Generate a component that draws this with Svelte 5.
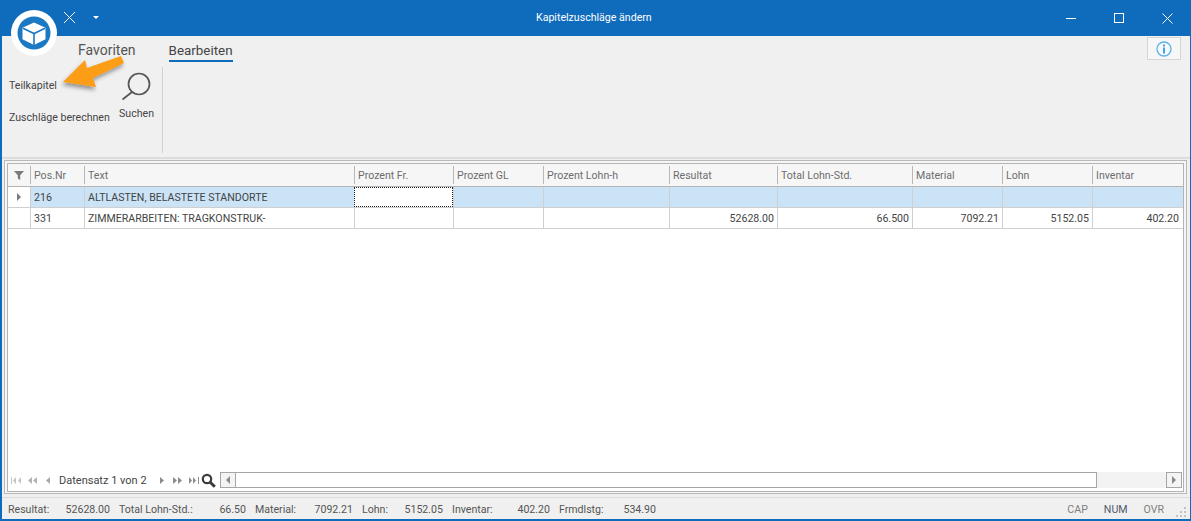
<script>
  const cols = [
    { label: 'Pos.Nr', w: 54 },
    { label: 'Text', w: 270 },
    { label: 'Prozent Fr.', w: 99 },
    { label: 'Prozent GL', w: 90 },
    { label: 'Prozent Lohn-h', w: 126 },
    { label: 'Resultat', w: 108 },
    { label: 'Total Lohn-Std.', w: 135 },
    { label: 'Material', w: 90 },
    { label: 'Lohn', w: 90 },
    { label: 'Inventar', w: 90 }
  ];
  const rows = [
    { sel: true, cells: ['216', 'ALTLASTEN, BELASTETE STANDORTE', '', '', '', '', '', '', '', ''] },
    { sel: false, cells: ['331', 'ZIMMERARBEITEN: TRAGKONSTRUK-', '', '', '', '52628.00', '66.500', '7092.21', '5152.05', '402.20'] }
  ];
  const totals = [
    { l: 'Resultat:', v: '52628.00', lw: 56, vw: 46 },
    { l: 'Total Lohn-Std.:', v: '66.50', lw: 88, vw: 39 },
    { l: 'Material:', v: '7092.21', lw: 49, vw: 49 },
    { l: 'Lohn:', v: '5152.05', lw: 32, vw: 49 },
    { l: 'Inventar:', v: '402.20', lw: 49, vw: 49 },
    { l: 'Frmdlstg:', v: '534.90', lw: 49, vw: 48 }
  ];
</script>

<div class="win">
  <header class="title">
    <svg class="qa-x" width="13" height="13" viewBox="0 0 13 13"><path d="M1 1l11 11M12 1L1 12" stroke="#fff" stroke-width="1" fill="none"/></svg>
    <span class="qa-drop"></span>
    <span class="title-text">Kapitelzuschläge ändern</span>
    <div class="wbtns">
      <svg width="10" height="10" viewBox="0 0 10 10"><path d="M0 5.500h10" stroke="#fff" fill="none"/></svg>
      <svg width="10" height="10" viewBox="0 0 10 10"><rect x=".5" y=".5" width="9" height="9" stroke="#fff" fill="none"/></svg>
      <svg width="11" height="11" viewBox="0 0 11 11"><path d="M.5.500l10 10M10.500.500l-10 10" stroke="#fff" fill="none"/></svg>
    </div>
  </header>

  <section class="ribbon">
    <nav class="tabs">
      <span class="tab">Favoriten</span>
      <span class="tab active">Bearbeiten</span>
      <span class="info">
        <svg width="16" height="16" viewBox="0 0 16 16"><circle cx="8" cy="8" r="7" fill="#f4fbff" stroke="#5cb2e6" stroke-width="1.3"/><rect x="7" y="3.500" width="2" height="2" fill="#4aa3dc"/><rect x="7" y="6.500" width="2" height="6" fill="#4aa3dc"/></svg>
      </span>
    </nav>
    <div class="group">
      <div class="small-btns">
        <span>Teilkapitel</span>
        <span>Zuschläge berechnen</span>
      </div>
      <div class="big-btn">
        <svg width="32" height="32" viewBox="0 0 32 32"><circle cx="18" cy="13" r="10.500" fill="none" stroke="#555" stroke-width="1.7"/><path d="M11 21l-9.500 7.500" stroke="#555" stroke-width="1.7" fill="none"/></svg>
        <span>Suchen</span>
      </div>
      <div class="sep"></div>
    </div>
  </section>

  <main class="frame">
    <div class="frame-in">
      <div class="grid">
        <div class="row head">
          <div class="ind">
            <svg width="10" height="10" viewBox="0 0 10 10"><path d="M0 1h10L6.200 5.200V10L3.800 8.600V5.200z" fill="#7a7a7a"/></svg>
          </div>
          {#each cols as c}
            <div class="hc" style="width:{c.w}px">{c.label}</div>
          {/each}
        </div>
        {#each rows as r}
          <div class="row data" class:sel={r.sel}>
            <div class="ind">
              {#if r.sel}<span class="tri"></span>{/if}
            </div>
            {#each r.cells as cell, i}
              <div class="dc" class:num={i > 1} class:focus={r.sel && i === 2} style="width:{cols[i].w}px">{cell}</div>
            {/each}
          </div>
        {/each}
        <div class="fill"></div>
        <div class="nav">
          <div class="pager">
            <span class="pg p1"><svg width="10" height="7" viewBox="0 0 10 7"><path d="M0 0h1v7H0zM5 0v7L2 3.500zM10 0v7L7 3.500z" fill="#c4c4c4"/></svg></span>
            <span class="pg p2"><svg width="9" height="7" viewBox="0 0 9 7"><path d="M4 0v7L0 3.500zM9 0v7L5 3.500z" fill="#b4b4b4"/></svg></span>
            <span class="pg p3"><svg width="5" height="7" viewBox="0 0 5 7"><path d="M4 0v7L0 3.500z" fill="#a8a8a8"/></svg></span>
            <span class="rec">Datensatz 1 von 2</span>
            <span class="pg p4"><svg width="5" height="7" viewBox="0 0 5 7"><path d="M0 0v7l4-3.500z" fill="#8c8c8c"/></svg></span>
            <span class="pg p5"><svg width="9" height="7" viewBox="0 0 9 7"><path d="M0 0v7l4-3.500zM5 0v7l4-3.500z" fill="#8c8c8c"/></svg></span>
            <span class="pg p6"><svg width="10" height="7" viewBox="0 0 10 7"><path d="M0 0v7l3-3.500zM4 0v7l3-3.500zM9 0h1v7H9z" fill="#8c8c8c"/></svg></span>
            <svg class="mag" width="15" height="15" viewBox="0 0 15 15"><circle cx="6" cy="6" r="4.200" fill="none" stroke="#3c3c3c" stroke-width="2.200"/><path d="M9.200 9.200l4.600 4.600" stroke="#3c3c3c" stroke-width="3" fill="none"/></svg>
          </div>
          <div class="hscroll">
            <span class="sb"><span class="tl"></span></span>
            <span class="thumb"></span>
            <span class="track"></span>
            <span class="sb"><span class="tr"></span></span>
          </div>
        </div>
      </div>
    </div>
  </main>

  <footer class="status">
    {#each totals as t}
      <span class="lbl" style="width:{t.lw}px">{t.l}</span>
      <span class="val" style="width:{t.vw}px">{t.v}</span>
    {/each}
    <span class="keys">
      <span class="key">CAP</span>
      <span class="key on">NUM</span>
      <span class="key">OVR</span>
    </span>
    <svg class="grip" width="11" height="11" viewBox="0 0 11 11"><path d="M8 0h2v2H8zM4 4h2v2H4zM8 4h2v2H8zM0 8h2v2H0zM4 8h2v2H4zM8 8h2v2H8z" fill="#c2c2c2"/></svg>
  </footer>

  <div class="logo">
    <svg width="46" height="46" viewBox="0 0 46 46">
      <circle cx="23" cy="23" r="23" fill="#fff"/>
      <circle cx="23" cy="23" r="16.500" fill="#1b79c4"/>
      <path d="M23 12.500l11.500 5.300v11.400L23 35 11.500 29.200V17.800z" fill="#fff"/>
      <path d="M12 18.200l11 5.300 11-5.300M23 23.500V35" fill="none" stroke="#1b79c4" stroke-width="1.600"/>
    </svg>
  </div>

  <svg class="arrow" width="70" height="40" viewBox="0 0 70 40">
    <defs><filter id="sh" x="-20%" y="-20%" width="140%" height="160%"><feDropShadow dx="-1" dy="3" stdDeviation="2" flood-color="#000" flood-opacity=".4"/></filter></defs>
    <path d="M2 29L24 7l2 8L60 3l3 7-31 15 3 9z" fill="#fb9d17" filter="url(#sh)"/>
  </svg>
</div>

<style>
  :global(body) { margin: 0; }
  .win {
    position: relative;
    width: 1191px;
    height: 521px;
    box-sizing: border-box;
    display: flex;
    flex-direction: column;
    background: #f0f0f0;
    border: solid #0f6cbd;
    border-width: 0 1px 2px 2px;
    font: 10.6px Roboto, "Liberation Sans", sans-serif;
    color: #444;
    overflow: hidden;
  }
  .title {
    flex: none;
    height: 36px;
    margin: 0 -1px 0 -2px;
    background: #0f6cbd;
    color: #fff;
    display: flex;
    align-items: center;
  }
  .qa-x { margin: -1px 0 0 63px; flex: none; }
  .qa-drop {
    flex: none;
    margin: -2px 0 0 17px;
    border: solid transparent;
    border-width: 3px 3px 0;
    border-top-color: #fff;
    width: 0;
    height: 0;
  }
  .title-text {
    flex: none;
    width: 117px;
    white-space: nowrap;
    margin-left: 437px;
    font-size: 10.6px;
    line-height: 14px;
  }
  .wbtns {
    display: flex;
    align-items: center;
    gap: 38px;
    margin-left: auto;
    padding-right: 18px;
  }
  .ribbon {
    flex: none;
    height: 121px;
    background: #f0f0f0;
  }
  .tabs {
    height: 28px;
    display: flex;
    align-items: flex-start;
    padding-left: 76px;
    gap: 33px;
    font-size: 14px;
    color: #555;
  }
  .tab { padding-top: 6px; height: 18px; line-height: 17px; white-space: nowrap; }
  .tab.active { font-size: 13.400px; color: #444; border-bottom: 2px solid #0f6cbd; }
  .info {
    margin: 1px 9px 0 auto;
    width: 32px;
    height: 21px;
    background: #f7f7f7;
    border: 1px solid #d6d6d6;
    display: flex;
    align-items: center;
    justify-content: center;
  }
  .group {
    display: flex;
    height: 86px;
    margin-top: 3px;
  }
  .small-btns {
    width: 109px;
    flex: none;
    padding: 12px 0 0 7px;
    display: flex;
    flex-direction: column;
    gap: 19px;
    line-height: 13px;
    color: #444;
    box-sizing: border-box;
    white-space: nowrap;
  }
  .big-btn {
    width: 51px;
    flex: none;
    display: flex;
    flex-direction: column;
    align-items: center;
    color: #444;
  }
  .big-btn svg { margin: 4px 0 0 0; }
  .big-btn span { margin-top: 4px; }
  .sep { width: 1px; background: #d2d2d2; }
  .frame {
    flex: 1;
    min-height: 0;
    padding: 1px 3px 3px 2px;
    border-top: 2px solid #dcdcdc;
    background: #f0f0f0;
    display: flex;
  }
  .frame-in {
    flex: 1;
    display: flex;
    border: 1px solid #b9b9b9;
    padding: 2px 2px 1px;
    background: #f6f6f6;
    min-width: 0;
  }
  .grid {
    flex: 1;
    display: flex;
    flex-direction: column;
    border: 1px solid #b4b4b4;
    background: #fff;
    min-width: 0;
    overflow: hidden;
  }
  .row { display: flex; flex: none; }
  .head {
    height: 22px;
    background: #f6f6f6;
    border-bottom: 1px solid #b4b4b4;
    color: #6d6d6d;
    align-items: center;
  }
  .ind {
    flex: none;
    width: 22px;
    height: 100%;
    display: flex;
    align-items: center;
    justify-content: center;
    background: #f6f6f6;
    box-sizing: border-box;
  }
  .hc {
    flex: none;
    box-sizing: border-box;
    height: 18px;
    line-height: 20px;
    padding-left: 3px;
    border-left: 1px solid #b8b8b8;
    white-space: nowrap;
  }
  .data {
    height: 20px;
    border-bottom: 1px solid #cfcfcf;
    color: #444;
    align-items: stretch;
  }
  .data .ind { background: #fff; }
  .data.sel { background: #cbe3f7; }
  .tri {
    width: 0;
    height: 0;
    border: solid transparent;
    border-width: 4px 0 4px 4px;
    border-left-color: #7a7a7a;
  }
  .dc {
    flex: none;
    box-sizing: border-box;
    line-height: 22px;
    padding: 0 3px;
    border-left: 1px solid #cfcfcf;
    white-space: nowrap;
    overflow: hidden;
  }
  .dc.num { text-align: right; }
  .dc.focus {
    background: #fff;
    outline: 1px dotted #222;
    outline-offset: -1px;
    border-left-color: transparent;
  }
  .fill { flex: 1; background: #fff; }
  .nav {
    flex: none;
    height: 20px;
    margin-bottom: 1px;
    display: flex;
    align-items: center;
    background: #fff;
  }
  .pager {
    width: 212px;
    flex: none;
    display: flex;
    align-items: center;
    padding-left: 3px;
    box-sizing: border-box;
    color: #444;
  }
  .pg { display: flex; align-items: center; }
  .p2 { margin-left: 7px; }
  .p3 { margin-left: 9px; }
  .rec { font-size: 11px; white-space: nowrap; width: 89px; flex: none; margin-left: 8px; color: #444; }
  .p4 { margin-left: 12px; }
  .p5 { margin-left: 8px; }
  .p6 { margin-left: 7px; }
  .mag { margin-left: 2px; }
  .hscroll {
    flex: 1;
    display: flex;
    height: 16px;
    background: #f3f3f3;
    margin-right: 1px;
  }
  .sb {
    flex: none;
    width: 16px;
    box-sizing: border-box;
    border: 1px solid #a6a6a6;
    background: #f4f4f4;
    display: flex;
    align-items: center;
    justify-content: center;
  }
  .tl, .tr { width: 0; height: 0; border: solid transparent; }
  .tl { border-width: 4px 4px 4px 0; border-right-color: #8a8a8a; }
  .tr { border-width: 4px 0 4px 4px; border-left-color: #8a8a8a; }
  .thumb {
    flex: none;
    width: 861px;
    box-sizing: border-box;
    background: #fff;
    border: 1px solid #a6a6a6;
    border-left: 0;
  }
  .track { flex: 1; }
  .status {
    flex: none;
    height: 22px;
    box-sizing: border-box;
    border-top: 1px solid #dcdcdc;
    display: flex;
    align-items: center;
    padding: 1px 3px 0 6px;
    background: #f0f0f0;
    color: #555;
    white-space: nowrap;
  }
  .lbl { flex: none; }
  .val { flex: none; text-align: right; margin-right: 9px; }
  .keys { margin-left: auto; display: flex; gap: 16px; color: #808080; margin-right: 12px; }
  .key.on { color: #4e5a6c; }
  .grip { flex: none; margin-top: 6px; }
  .logo {
    position: absolute;
    left: 9px;
    top: 10px;
    width: 46px;
    height: 46px;
  }
  .arrow {
    position: absolute;
    left: 59px;
    top: 53px;
    overflow: visible;
  }
</style>
